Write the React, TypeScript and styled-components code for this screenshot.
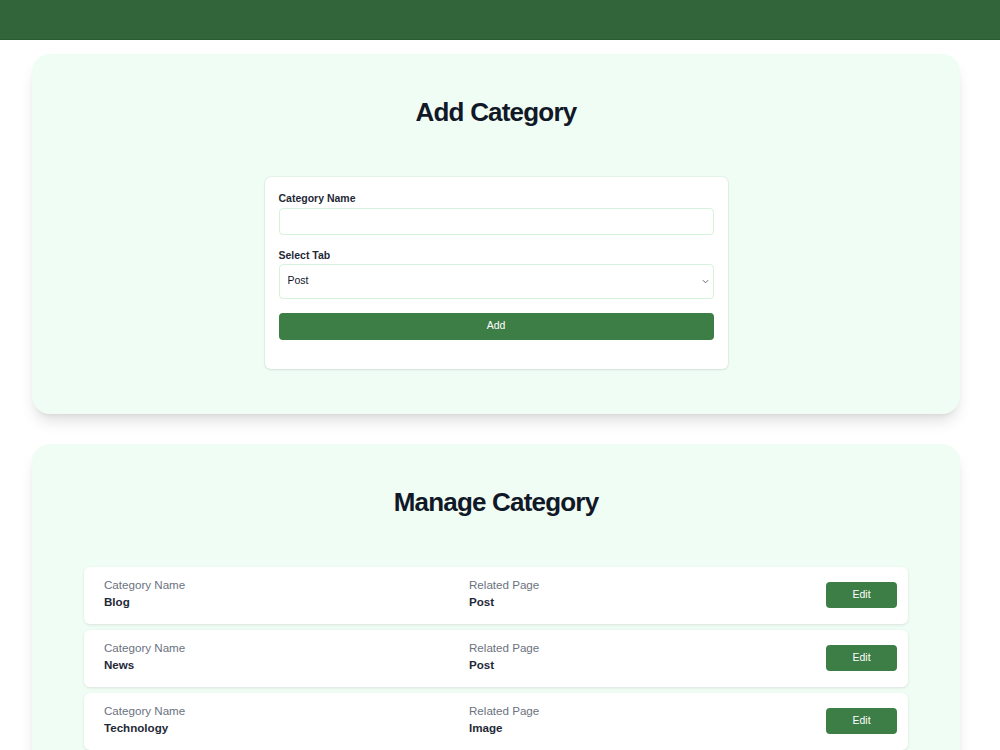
import React, { useState } from "react";
import styled, { createGlobalStyle } from "styled-components";

const GlobalStyle = createGlobalStyle`
  html {
    scrollbar-width: none;
  }
  html::-webkit-scrollbar {
    display: none;
  }
  body {
    margin: 0;
    background: #ffffff;
    font-family: "Liberation Sans", Arial, sans-serif;
    color: #111827;
  }
  * {
    box-sizing: border-box;
  }
`;

const Header = styled.header`
  height: 40px;
  background: #32663a;
  border-bottom: 1px solid #2b5a32;
`;

const Main = styled.main`
  display: flex;
  flex-direction: column;
  gap: 30px;
  padding: 14px 40px 40px 32px;
`;

const Card = styled.section<{ $padX: number }>`
  background: #f0fdf4;
  border-radius: 18px;
  padding: 42px ${(p) => p.$padX}px 45px;
  box-shadow: 0 10px 15px -3px rgba(0, 0, 0, 0.12), 0 4px 6px -4px rgba(0, 0, 0, 0.1);
`;

const Title = styled.h2`
  margin: 0 0 49px;
  text-align: center;
  font-size: 26px;
  line-height: 32px;
  font-weight: 700;
  letter-spacing: -0.8px;
  color: #111827;
`;

const FormBox = styled.form`
  width: 463px;
  margin: 0 auto;
  background: #ffffff;
  border-radius: 6px;
  padding: 14px 14px 29px;
  box-shadow: 0 1px 3px rgba(0, 0, 0, 0.08), 0 0 0 1px rgba(220, 240, 226, 0.6);
  display: flex;
  flex-direction: column;
`;

const Label = styled.label<{ $gap: number }>`
  display: block;
  font-size: 10.5px;
  line-height: 14px;
  font-weight: 700;
  color: #1f2937;
  margin-bottom: ${(p) => p.$gap}px;
`;

const Input = styled.input`
  height: 27px;
  width: 100%;
  border: 1px solid #d3f3dd;
  border-radius: 4px;
  padding: 0 8px;
  font-size: 11px;
  font-family: inherit;
  margin-bottom: 13px;
  outline: none;
`;

const SelectWrap = styled.div`
  position: relative;
  margin-bottom: 14px;
`;

const Select = styled.select`
  appearance: none;
  width: 100%;
  height: 35px;
  border: 1px solid #d3f3dd;
  border-radius: 4px;
  padding: 0 8px 3px;
  background: #ffffff;
  font-size: 10.5px;
  font-family: inherit;
  color: #111827;
  outline: none;
`;

const Chevron = styled.svg`
  position: absolute;
  right: 5px;
  top: 15px;
  width: 7px;
  height: 5px;
  pointer-events: none;
`;

const AddButton = styled.button`
  height: 27px;
  width: 100%;
  border: none;
  border-radius: 4px;
  padding: 0 0 3px;
  background: #3d7d46;
  color: #ffffff;
  font-size: 10.5px;
  font-family: inherit;
  cursor: pointer;
`;

const List = styled.div`
  display: flex;
  flex-direction: column;
  gap: 6px;
`;

const Row = styled.div`
  display: grid;
  grid-template-columns: 365px 1fr auto;
  align-items: center;
  background: #ffffff;
  border-radius: 6px;
  padding: 10px 11px 14px 20px;
  box-shadow: 0 1px 3px rgba(0, 0, 0, 0.1);
`;

const Field = styled.div`
  display: flex;
  flex-direction: column;
`;

const FieldLabel = styled.span`
  font-size: 11.6px;
  line-height: 16px;
  color: #6b7280;
`;

const FieldValue = styled.span`
  font-size: 11.6px;
  line-height: 17px;
  font-weight: 700;
  color: #1f2937;
`;

const EditButton = styled.button`
  width: 71px;
  height: 26px;
  margin-top: 3px;
  border: none;
  border-radius: 4px;
  padding: 0 0 3px;
  background: #3d7d46;
  color: #ffffff;
  font-size: 10.5px;
  font-family: inherit;
  cursor: pointer;
`;

const categories = [
  { name: "Blog", page: "Post" },
  { name: "News", page: "Post" },
  { name: "Technology", page: "Image" },
];

const App: React.FC = () => {
  const [name, setName] = useState("");
  const [tab, setTab] = useState("Post");

  return (
    <>
      <GlobalStyle />
      <Header />
      <Main>
        <Card $padX={0}>
          <Title>Add Category</Title>
          <FormBox onSubmit={(e) => e.preventDefault()}>
            <Label $gap={3}>Category Name</Label>
            <Input value={name} onChange={(e) => setName(e.target.value)} />
            <Label $gap={2}>Select Tab</Label>
            <SelectWrap>
              <Select value={tab} onChange={(e) => setTab(e.target.value)}>
                <option>Post</option>
                <option>Image</option>
              </Select>
              <Chevron viewBox="0 0 8 5">
                <path d="M1 1l3 3 3-3" fill="none" stroke="#4b5563" strokeWidth="1" />
              </Chevron>
            </SelectWrap>
            <AddButton type="submit">Add</AddButton>
          </FormBox>
        </Card>

        <Card $padX={52}>
          <Title>Manage Category</Title>
          <List>
            {categories.map((c) => (
              <Row key={c.name}>
                <Field>
                  <FieldLabel>Category Name</FieldLabel>
                  <FieldValue>{c.name}</FieldValue>
                </Field>
                <Field>
                  <FieldLabel>Related Page</FieldLabel>
                  <FieldValue>{c.page}</FieldValue>
                </Field>
                <EditButton>Edit</EditButton>
              </Row>
            ))}
          </List>
        </Card>
      </Main>
    </>
  );
};

export default App;
